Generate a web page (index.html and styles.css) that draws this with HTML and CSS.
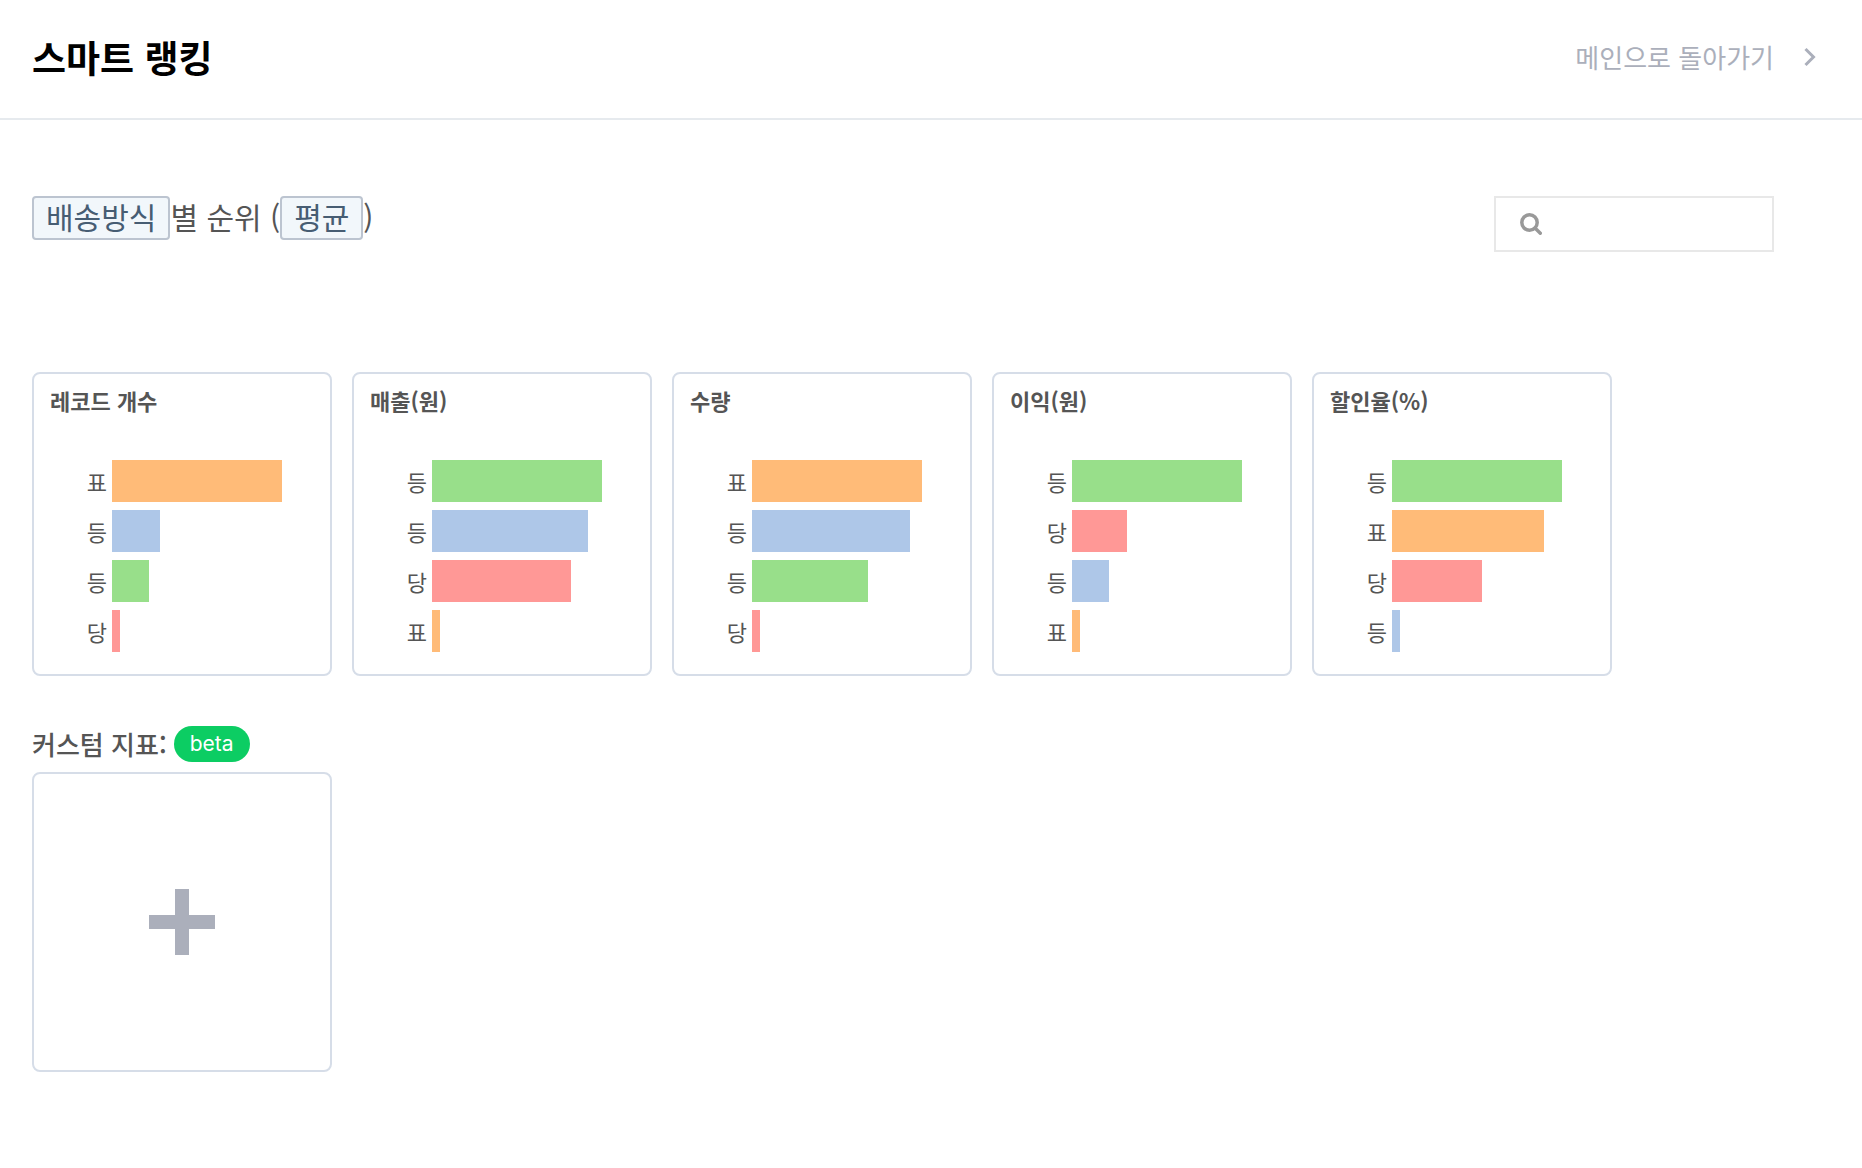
FILE: index.html
```html
<!DOCTYPE html>
<html lang="ko">
<head>
    <meta charset="UTF-8">
    <meta name="viewport" content="width=device-width, initial-scale=1.0">
    <title>스마트 랭킹</title>
    <link rel="stylesheet" href="styles.css">
</head>
<body>
    <header class="page-header">
        <h1>스마트 랭킹</h1>
        <a class="back-link" href="#">
            메인으로 돌아가기
            <svg width="12" height="20" viewBox="0 0 12 20" fill="none" stroke="currentColor" stroke-width="3" aria-hidden="true">
                <path d="M1.5 2 L9.5 10 L1.5 18"/>
            </svg>
        </a>
    </header>

    <main>
        <div class="toolbar">
            <div class="criteria">
                <button type="button" class="pill">배송방식</button><span>별 순위 (</span><button type="button" class="pill">평균</button><span>)</span>
            </div>
            <label class="search">
                <svg width="22" height="22" viewBox="0 0 22 22" fill="none" stroke="currentColor" aria-hidden="true">
                    <circle cx="9.5" cy="9.5" r="7.7" stroke-width="3.5"/>
                    <path d="M15 15 L20.3 20.3" stroke-width="3.4" stroke-linecap="round"/>
                </svg>
                <input type="text" aria-label="검색">
            </label>
        </div>

        <section class="cards">
            <article class="card">
                <h2>레코드 개수</h2>
                <div class="chart">
                    <div class="row"><span>표</span><div class="track"><div class="bar orange" style="width: 100%"></div></div></div>
                    <div class="row"><span>등</span><div class="track"><div class="bar blue" style="width: 28.4%"></div></div></div>
                    <div class="row"><span>등</span><div class="track"><div class="bar green" style="width: 21.8%"></div></div></div>
                    <div class="row"><span>당</span><div class="track"><div class="bar red" style="width: 4.7%"></div></div></div>
                </div>
            </article>
            <article class="card">
                <h2>매출(원)</h2>
                <div class="chart">
                    <div class="row"><span>등</span><div class="track"><div class="bar green" style="width: 100%"></div></div></div>
                    <div class="row"><span>등</span><div class="track"><div class="bar blue" style="width: 92%"></div></div></div>
                    <div class="row"><span>당</span><div class="track"><div class="bar red" style="width: 82%"></div></div></div>
                    <div class="row"><span>표</span><div class="track"><div class="bar orange" style="width: 4.7%"></div></div></div>
                </div>
            </article>
            <article class="card">
                <h2>수량</h2>
                <div class="chart">
                    <div class="row"><span>표</span><div class="track"><div class="bar orange" style="width: 100%"></div></div></div>
                    <div class="row"><span>등</span><div class="track"><div class="bar blue" style="width: 93%"></div></div></div>
                    <div class="row"><span>등</span><div class="track"><div class="bar green" style="width: 68.4%"></div></div></div>
                    <div class="row"><span>당</span><div class="track"><div class="bar red" style="width: 4.7%"></div></div></div>
                </div>
            </article>
            <article class="card">
                <h2>이익(원)</h2>
                <div class="chart">
                    <div class="row"><span>등</span><div class="track"><div class="bar green" style="width: 100%"></div></div></div>
                    <div class="row"><span>당</span><div class="track"><div class="bar red" style="width: 32.2%"></div></div></div>
                    <div class="row"><span>등</span><div class="track"><div class="bar blue" style="width: 21.8%"></div></div></div>
                    <div class="row"><span>표</span><div class="track"><div class="bar orange" style="width: 4.7%"></div></div></div>
                </div>
            </article>
            <article class="card">
                <h2>할인율(%)</h2>
                <div class="chart">
                    <div class="row"><span>등</span><div class="track"><div class="bar green" style="width: 100%"></div></div></div>
                    <div class="row"><span>표</span><div class="track"><div class="bar orange" style="width: 89.3%"></div></div></div>
                    <div class="row"><span>당</span><div class="track"><div class="bar red" style="width: 53%"></div></div></div>
                    <div class="row"><span>등</span><div class="track"><div class="bar blue" style="width: 4.7%"></div></div></div>
                </div>
            </article>
        </section>

        <section class="custom">
            <h2>커스텀 지표: <span class="badge">beta</span></h2>
            <button type="button" class="add-card" aria-label="커스텀 지표 추가">
                <svg width="66" height="66" viewBox="0 0 66 66" fill="currentColor" aria-hidden="true">
                    <path d="M26 0 H40 V26 H66 V40 H40 V66 H26 V40 H0 V26 H26 Z"/>
                </svg>
            </button>
        </section>
    </main>
</body>
</html>
```

FILE: styles.css
```css
* { box-sizing: border-box; }
body {
    margin: 0;
    background: #fff;
    color: #555;
    font-family: 'Noto Sans CJK KR', sans-serif;
}
h1, h2 { margin: 0; }
button, input { font: inherit; }

.page-header {
    display: flex;
    justify-content: space-between;
    align-items: center;
    height: 120px;
    padding: 0 46px 4px 32px;
    border-bottom: 2px solid #e6eaee;
}
.page-header h1 {
    color: #000;
    font-size: 37px;
    font-weight: 600;
    line-height: 56px;
}
.back-link {
    display: flex;
    align-items: center;
    gap: 30px;
    color: #abafbb;
    font-size: 26px;
    font-weight: 400;
    line-height: 38px;
    text-decoration: none;
}

main { padding: 76px 32px 48px; }

.toolbar {
    display: flex;
    justify-content: space-between;
    align-items: flex-start;
    padding-right: 56px;
}
.criteria {
    display: flex;
    align-items: center;
    font-size: 30px;
    line-height: 40px;
    white-space: pre;
}
.criteria span { line-height: 36px; padding-bottom: 4px; }
.pill {
    height: 44px;
    padding: 0 12px 4px;
    border: 2px solid #bcc4d0;
    border-radius: 4px;
    background: #f2f7fb;
    color: #475d73;
    line-height: 36px;
    cursor: pointer;
}
.search {
    display: flex;
    align-items: center;
    gap: 12px;
    width: 280px;
    height: 56px;
    padding: 0 24px;
    border: 2px solid #e8e8e8;
    color: #999;
}
.search svg { flex: none; }
.search input {
    flex: 1;
    min-width: 0;
    border: none;
    outline: none;
    background: none;
    font-size: 22px;
}

.cards {
    display: flex;
    flex-wrap: wrap;
    gap: 20px;
    margin-top: 120px;
}
.card {
    width: 300px;
    padding: 10px 16px 22px;
    border: 2px solid #d6dde8;
    border-radius: 8px;
}
.card h2 {
    font-size: 22px;
    font-weight: 700;
    line-height: 32px;
}
.chart {
    display: flex;
    flex-direction: column;
    gap: 8px;
    margin-top: 44px;
    padding: 0 32px;
}
.row {
    display: flex;
    align-items: center;
    justify-content: flex-end;
    gap: 5px;
    font-size: 22px;
    line-height: 42px;
}
.track { width: 170px; }
.bar { height: 42px; }
.orange { background: #ffbb78; }
.blue { background: #aec7e8; }
.green { background: #98df8a; }
.red { background: #ff9896; }

.custom { margin-top: 50px; }
.custom h2 {
    display: flex;
    align-items: center;
    gap: 7px;
    font-size: 26px;
    font-weight: 500;
    line-height: 36px;
}
.badge {
    padding: 0 16px;
    border-radius: 18px;
    background: #0ccd63;
    color: #fff;
    font-family: Inter, sans-serif;
    font-size: 21px;
    font-weight: 400;
}
.add-card {
    display: flex;
    align-items: center;
    justify-content: center;
    width: 300px;
    height: 300px;
    margin-top: 10px;
    border: 2px solid #d6dde8;
    border-radius: 8px;
    background: #fff;
    color: #abafbb;
    cursor: pointer;
}
```
